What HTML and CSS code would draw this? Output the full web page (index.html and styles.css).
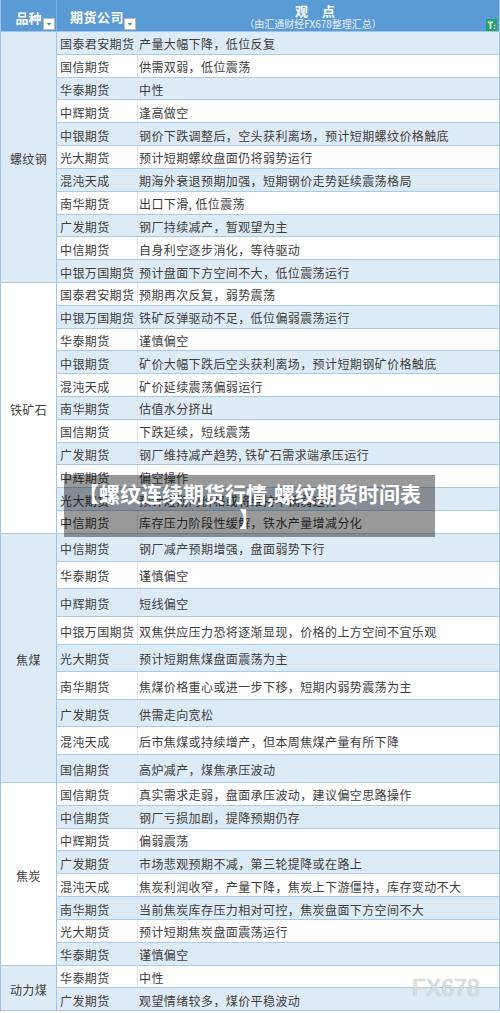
FILE: index.html
```html
<!DOCTYPE html>
<html lang="zh-CN">
<head>
<meta charset="utf-8">
<title>螺纹连续期货行情</title>
<link rel="stylesheet" href="styles.css">
</head>
<body>
<div class="sheet">
  <div class="head">
    <div class="h-cat">品种
      <span class="filter"><svg width="12" height="12" viewBox="0 0 12 12"><rect x="0.5" y="0.5" width="11" height="11" fill="#fff" stroke="#b9b9b9"/><polygon points="3.8,5 8.2,5 6,7.6" fill="#1f9d55"/></svg></span>
    </div>
    <div class="h-co">期货公司
      <span class="filter"><svg width="12" height="12" viewBox="0 0 12 12"><rect x="0.5" y="0.5" width="11" height="11" fill="#fff" stroke="#b9b9b9"/><polygon points="3.8,5 8.2,5 6,7.6" fill="#1f9d55"/></svg></span>
    </div>
    <div class="h-op">
      <div class="h-title">观点</div>
      <div class="h-sub">（由汇通财经FX678整理汇总）</div>
      <span class="t-icon"><svg width="11" height="12" viewBox="0 0 11 12"><rect width="11" height="12" fill="#21a366"/><path d="M1.8 2.6h5.4v1.6H5.3V10H3.7V4.2H1.8z" fill="#fff"/><circle cx="8.6" cy="6.4" r="0.8" fill="#fff"/><circle cx="8.6" cy="9.2" r="0.8" fill="#fff"/></svg></span>
    </div>
  </div>

  <div class="group cat-blue odd-blue">
    <div class="cat">螺纹钢</div>
    <div class="rows">
      <div class="row"><div class="co">国泰君安期货</div><div class="op">产量大幅下降，低位反复</div></div>
      <div class="row"><div class="co">国信期货</div><div class="op">供需双弱，低位震荡</div></div>
      <div class="row"><div class="co">华泰期货</div><div class="op">中性</div></div>
      <div class="row"><div class="co">中辉期货</div><div class="op">逢高做空</div></div>
      <div class="row"><div class="co">中银期货</div><div class="op">钢价下跌调整后，空头获利离场，预计短期螺纹价格触底</div></div>
      <div class="row"><div class="co">光大期货</div><div class="op">预计短期螺纹盘面仍将弱势运行</div></div>
      <div class="row"><div class="co">混沌天成</div><div class="op">期海外衰退预期加强，短期钢价走势延续震荡格局</div></div>
      <div class="row"><div class="co">南华期货</div><div class="op">出口下滑, 低位震荡</div></div>
      <div class="row"><div class="co">广发期货</div><div class="op">钢厂持续减产，暂观望为主</div></div>
      <div class="row"><div class="co">中信期货</div><div class="op">自身利空逐步消化，等待驱动</div></div>
      <div class="row"><div class="co">中银万国期货</div><div class="op">预计盘面下方空间不大，低位震荡运行</div></div>
    </div>
  </div>

  <div class="group even-blue">
    <div class="cat">铁矿石</div>
    <div class="rows">
      <div class="row"><div class="co">国泰君安期货</div><div class="op">预期再次反复，弱势震荡</div></div>
      <div class="row"><div class="co">中银万国期货</div><div class="op">铁矿反弹驱动不足，低位偏弱震荡运行</div></div>
      <div class="row"><div class="co">华泰期货</div><div class="op">谨慎偏空</div></div>
      <div class="row"><div class="co">中银期货</div><div class="op">矿价大幅下跌后空头获利离场，预计短期钢矿价格触底</div></div>
      <div class="row"><div class="co">混沌天成</div><div class="op">矿价延续震荡偏弱运行</div></div>
      <div class="row"><div class="co">南华期货</div><div class="op">估值水分挤出</div></div>
      <div class="row"><div class="co">国信期货</div><div class="op">下跌延续，短线震荡</div></div>
      <div class="row"><div class="co">广发期货</div><div class="op">钢厂维持减产趋势, 铁矿石需求端承压运行</div></div>
      <div class="row"><div class="co">中辉期货</div><div class="op">偏空操作</div></div>
      <div class="row"><div class="co">光大期货</div><div class="op">预计短期内价格或将维持中偏弱运行</div></div>
      <div class="row"><div class="co">中信期货</div><div class="op">库存压力阶段性缓解，铁水产量增减分化</div></div>
    </div>
  </div>

  <div class="group cat-blue odd-blue tall">
    <div class="cat">焦煤</div>
    <div class="rows">
      <div class="row"><div class="co">中信期货</div><div class="op">钢厂减产预期增强，盘面弱势下行</div></div>
      <div class="row"><div class="co">华泰期货</div><div class="op">谨慎偏空</div></div>
      <div class="row"><div class="co">中辉期货</div><div class="op">短线偏空</div></div>
      <div class="row"><div class="co">中银万国期货</div><div class="op">双焦供应压力恐将逐渐显现，价格的上方空间不宜乐观</div></div>
      <div class="row"><div class="co">光大期货</div><div class="op">预计短期焦煤盘面震荡为主</div></div>
      <div class="row"><div class="co">南华期货</div><div class="op">焦煤价格重心或进一步下移，短期内弱势震荡为主</div></div>
      <div class="row"><div class="co">广发期货</div><div class="op">供需走向宽松</div></div>
      <div class="row"><div class="co">混沌天成</div><div class="op">后市焦煤或持续增产，但本周焦煤产量有所下降</div></div>
      <div class="row"><div class="co">国信期货</div><div class="op">高炉减产，煤焦承压波动</div></div>
    </div>
  </div>

  <div class="group even-blue coke">
    <div class="cat">焦炭</div>
    <div class="rows">
      <div class="row"><div class="co">国信期货</div><div class="op">真实需求走弱，盘面承压波动，建议偏空思路操作</div></div>
      <div class="row"><div class="co">中信期货</div><div class="op">钢厂亏损加剧，提降预期仍存</div></div>
      <div class="row"><div class="co">中辉期货</div><div class="op">偏弱震荡</div></div>
      <div class="row"><div class="co">广发期货</div><div class="op">市场悲观预期不减，第三轮提降或在路上</div></div>
      <div class="row"><div class="co">混沌天成</div><div class="op">焦炭利润收窄，产量下降，焦炭上下游僵持，库存变动不大</div></div>
      <div class="row"><div class="co">南华期货</div><div class="op">当前焦炭库存压力相对可控，焦炭盘面下方空间不大</div></div>
      <div class="row"><div class="co">光大期货</div><div class="op">预计短期焦炭盘面震荡运行</div></div>
      <div class="row"><div class="co">华泰期货</div><div class="op">谨慎偏空</div></div>
    </div>
  </div>

  <div class="group cat-blue even-blue short">
    <div class="cat">动力煤</div>
    <div class="rows">
      <div class="row"><div class="co">华泰期货</div><div class="op">中性</div></div>
      <div class="row"><div class="co">广发期货</div><div class="op">观望情绪较多，煤价平稳波动</div></div>
    </div>
  </div>

  <div class="banner">【螺纹连续期货行情,螺纹期货时间表】</div>
  <div class="watermark">FX678</div>
</div>
</body>
</html>
```

FILE: styles.css
```css
html, body {
  margin: 0;
  padding: 0;
  background: #ffffff;
}

.sheet {
  position: relative;
  width: 500px;
  box-sizing: border-box;
  border-left: 1px solid #9fc4e8;
  border-right: 1px solid #9fc4e8;
  font-family: "Noto Sans CJK SC", "Noto Sans", sans-serif;
  font-size: 12px;
  letter-spacing: 0.4px;
  color: #3d3d3d;
}

/* header */
.head {
  display: flex;
  height: 32px;
  box-sizing: border-box;
  background: #5b9bd5;
  border-bottom: 1px solid #9fc4e8;
  color: #ffffff;
  font-weight: bold;
  font-size: 13px;
}

.h-cat {
  position: relative;
  width: 56px;
  box-sizing: border-box;
  border-right: 1px solid #7eb0e0;
  display: flex;
  justify-content: center;
  align-items: center;
  padding-top: 3px;
  letter-spacing: 0;
}

.h-co {
  position: relative;
  width: 80px;
  box-sizing: border-box;
  display: flex;
  justify-content: center;
  align-items: center;
  padding-top: 1px;
  letter-spacing: 0.5px;
}

.h-op {
  position: relative;
  flex: 1;
  display: flex;
  flex-direction: column;
  align-items: center;
  padding-right: 6px;
}

.h-title {
  font-size: 13px;
  line-height: 15px;
  margin-top: 3px;
  letter-spacing: 14px;
  padding-left: 14px;
}

.h-sub {
  font-size: 10px;
  line-height: 12px;
  font-weight: normal;
  letter-spacing: 0;
  color: #e8f0f9;
  margin-left: -4px;
}

.filter {
  position: absolute;
  right: 1px;
  top: 18px;
  width: 12px;
  height: 12px;
  display: block;
}

.filter svg,
.t-icon svg {
  display: block;
}

.t-icon {
  position: absolute;
  right: 2px;
  top: 19px;
  width: 11px;
  height: 12px;
}

/* body groups */
.group {
  display: flex;
}

.cat {
  width: 56px;
  box-sizing: border-box;
  border-right: 1px solid #9fc4e8;
  border-bottom: 1px solid #a9cbeb;
  display: flex;
  justify-content: center;
  align-items: center;
  padding-top: 3px;
  background: #ffffff;
}

.cat-blue .cat {
  background: #ddebf7;
}

.rows {
  flex: 1;
  display: flex;
  flex-direction: column;
}

.row {
  display: flex;
  height: 22.82px;
  box-sizing: border-box;
  border-bottom: 1px solid #a9cbeb;
  background: #ffffff;
}

.tall .row {
  height: 27.67px;
}

.coke .row {
  height: 22.88px;
}

.short .row {
  height: 22.5px;
}

.odd-blue .row:nth-child(odd),
.even-blue .row:nth-child(even) {
  background: #ddebf7;
}

.co {
  width: 80px;
  box-sizing: border-box;
  padding-left: 3px;
  padding-top: 2px;
  display: flex;
  align-items: center;
  white-space: nowrap;
  overflow: hidden;
}

.op {
  flex: 1;
  box-sizing: border-box;
  border-left: 1px solid #dbe6f2;
  padding-left: 1px;
  padding-top: 2px;
  display: flex;
  align-items: center;
  white-space: nowrap;
  overflow: hidden;
}

/* overlays */
.banner {
  position: absolute;
  left: 63px;
  top: 475px;
  width: 371px;
  height: 62px;
  box-sizing: border-box;
  padding: 6px 12px;
  background: rgba(0, 0, 0, 0.4);
  color: #ffffff;
  font-weight: bold;
  font-size: 21px;
  line-height: 25px;
  letter-spacing: 0;
  text-align: center;
  line-break: anywhere;
}

.watermark {
  position: absolute;
  left: 411px;
  top: 975px;
  font-family: "Liberation Sans", Arial, sans-serif;
  font-size: 23px;
  letter-spacing: 0;
  color: rgba(235, 235, 235, 0.85);
  text-shadow: 0 0 1px #9a9a9a;
}
```
